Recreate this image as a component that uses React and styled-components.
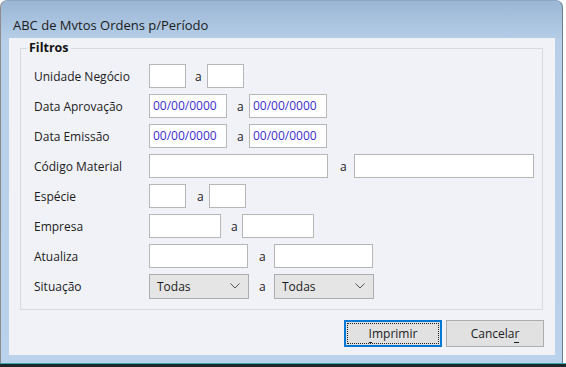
import React from "react";
import styled, { createGlobalStyle } from "styled-components";

const GlobalStyle = createGlobalStyle`
  html, body {
    margin: 0;
    padding: 0;
    background: #ffffff;
  }
  body {
    font-family: "Open Sans", "Noto Sans", sans-serif;
    font-size: 12px;
    color: #1b1b1b;
  }
`;

const Screen = styled.div`
  width: 566px;
  height: 367px;
  display: flex;
  flex-direction: column;
  overflow: hidden;
`;

const Window = styled.div`
  width: 563px;
  height: 363px;
  box-sizing: border-box;
  display: flex;
  flex-direction: column;
  border-left: 1px solid #8c8c8c;
  border-right: 1px solid #6a7f92;
  border-top: 1px solid #8fa6bf;
  border-radius: 7px 7px 0 0;
  background: linear-gradient(to bottom, #9ab6d5 0px, #b7cfe8 40px, #bad2ec 100%);
  padding: 0 7px 8px 8px;
`;

const TitleBar = styled.div`
  height: 37px;
  box-sizing: border-box;
  padding: 15px 0 0 4px;
  font-size: 13px;
  color: #1a1a1a;
  line-height: 18px;
`;

const Client = styled.div`
  flex: 1;
  background: #f1f2f8;
  padding: 2px 12px 0 11px;
  display: flex;
  flex-direction: column;
`;

const GroupBox = styled.fieldset`
  margin: 0;
  border: 1px solid #d9d9df;
  padding: 8px 0 11px 13px;
  display: flex;
  flex-direction: column;
  gap: 6px;
`;

const Legend = styled.legend`
  font-weight: 700;
  font-size: 12.5px;
  color: #111;
  padding: 0 2px;
  margin-left: -7px;
  line-height: 16px;
`;

const Row = styled.div`
  display: flex;
  align-items: center;
  height: 24px;
`;

const Label = styled.div`
  width: 115px;
  flex: none;
`;

const Input = styled.div`
  width: ${(p) => p.$w}px;
  height: 24px;
  box-sizing: border-box;
  background: #ffffff;
  border: 1px solid #b7b7b7;
  color: #3b2ccf;
  padding: 0 3px;
  line-height: 22px;
  font-size: 12px;
  flex: none;
`;

const Select = styled.div`
  width: ${(p) => p.$w}px;
  height: 25px;
  box-sizing: border-box;
  background: #e5e5e5;
  border: 1px solid #adadad;
  display: flex;
  align-items: center;
  justify-content: space-between;
  padding: 0 8px 0 7px;
  flex: none;
`;

const Sep = styled.div`
  width: ${(p) => p.$w}px;
  padding-left: ${(p) => p.$pl}px;
  box-sizing: border-box;
  flex: none;
`;

const Footer = styled.div`
  display: flex;
  justify-content: flex-end;
  gap: 4px;
  padding: 10px 0 0 0;
  margin-right: -1px;
`;

const Button = styled.button`
  width: 98px;
  height: 27px;
  box-sizing: border-box;
  font-family: inherit;
  font-size: 12px;
  color: #1b1b1b;
  background: #e1e1e1;
  border: 1px solid ${(p) => (p.$default ? "#0078d7" : "#adadad")};
  padding: 0;
  position: relative;
  outline: ${(p) => (p.$default ? "1px solid #0078d7" : "none")};
  outline-offset: -2px;
  u {
    text-decoration: none;
    border-bottom: 1px solid #1b1b1b;
    line-height: 12px;
  }
`;

const FocusRect = styled.span`
  position: absolute;
  inset: 2px;
  border: 1px dotted #222;
`;

const Taskbar = styled.div`
  flex: 1;
  background: #1e2727;
  border-top: 1px solid #3aa6b0;
`;

const Chevron = () => (
  <svg width="10" height="6" viewBox="0 0 10 6">
    <path d="M0.5 0.5 L5 5 L9.5 0.5" fill="none" stroke="#555" strokeWidth="1" />
  </svg>
);

export default function App() {
  return (
    <>
      <GlobalStyle />
      <Screen>
        <Window>
          <TitleBar>ABC de Mvtos Ordens p/Período</TitleBar>
          <Client>
            <GroupBox>
              <Legend>Filtros</Legend>
              <Row>
                <Label>Unidade Negócio</Label>
                <Input $w={37} />
                <Sep $w={21} $pl={9}>a</Sep>
                <Input $w={37} />
              </Row>
              <Row>
                <Label>Data Aprovação</Label>
                <Input $w={78}>00/00/0000</Input>
                <Sep $w={22} $pl={10}>a</Sep>
                <Input $w={78}>00/00/0000</Input>
              </Row>
              <Row>
                <Label>Data Emissão</Label>
                <Input $w={78}>00/00/0000</Input>
                <Sep $w={22} $pl={10}>a</Sep>
                <Input $w={78}>00/00/0000</Input>
              </Row>
              <Row>
                <Label>Código Material</Label>
                <Input $w={179} />
                <Sep $w={26} $pl={12}>a</Sep>
                <Input $w={180} />
              </Row>
              <Row>
                <Label>Espécie</Label>
                <Input $w={37} />
                <Sep $w={23} $pl={11}>a</Sep>
                <Input $w={37} />
              </Row>
              <Row>
                <Label>Empresa</Label>
                <Input $w={72} />
                <Sep $w={21} $pl={10}>a</Sep>
                <Input $w={72} />
              </Row>
              <Row>
                <Label>Atualiza</Label>
                <Input $w={99} />
                <Sep $w={26} $pl={11}>a</Sep>
                <Input $w={99} />
              </Row>
              <Row>
                <Label>Situação</Label>
                <Select $w={100}>
                  Todas
                  <Chevron />
                </Select>
                <Sep $w={25} $pl={10}>a</Sep>
                <Select $w={100}>
                  Todas
                  <Chevron />
                </Select>
              </Row>
            </GroupBox>
            <Footer>
              <Button $default>
                <FocusRect />
                <u>I</u>mprimir
              </Button>
              <Button>
                Cancela<u>r</u>
              </Button>
            </Footer>
          </Client>
        </Window>
        <Taskbar />
      </Screen>
    </>
  );
}
